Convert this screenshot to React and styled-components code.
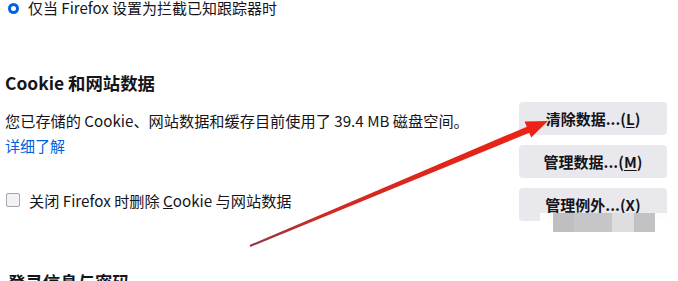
import React from "react";
import styled, { createGlobalStyle } from "styled-components";

const Global = createGlobalStyle`
  html, body {
    margin: 0;
    padding: 0;
    background: #fff;
  }
  body {
    font-family: "Noto Sans CJK SC", "Noto Sans", sans-serif;
    color: #15141a;
    overflow: hidden;
  }
`;

const Page = styled.div`
  position: relative;
  width: 678px;
  height: 281px;
  overflow: hidden;
  font-size: 15px;
`;

const OptionRow = styled.label`
  display: flex;
  align-items: center;
  gap: 9px;
  height: 16px;
  padding-left: 8px;
  font-size: 15px;
  line-height: 16px;
`;

const Radio = styled.span`
  width: 11px;
  height: 11px;
  box-sizing: border-box;
  border-radius: 50%;
  border: 3.5px solid #0061e0;
  background: #fff;
  flex-shrink: 0;
`;

const Section = styled.section`
  padding: 56px 11px 0 5px;
`;

const Heading = styled.h2`
  margin: 0;
  font-size: 17.4px;
  line-height: 22px;
  font-weight: 700;
`;

const Body = styled.div`
  display: flex;
  align-items: flex-start;
  margin-top: 6px;
`;

const Left = styled.div`
  flex: 1;
  padding-top: 10px;
`;

const Text = styled.div`
  font-size: 15.2px;
  line-height: 20px;
  white-space: nowrap;
`;

const Link = styled.a`
  display: block;
  margin-top: 6px;
  font-size: 15px;
  line-height: 20px;
  color: #0061e0;
  text-decoration: none;
`;

const CheckRow = styled.label`
  display: flex;
  align-items: center;
  gap: 9px;
  margin-top: 34px;
  padding-left: 1px;
  font-size: 15.2px;
  line-height: 20px;
`;

const Checkbox = styled.span`
  width: 14px;
  height: 14px;
  box-sizing: border-box;
  border: 1px solid #a4a4ad;
  border-radius: 2px;
  background: #f3f3f6;
  flex-shrink: 0;
`;

const Buttons = styled.div`
  display: flex;
  flex-direction: column;
  gap: 10px;
  width: 148px;
  margin-top: 2px;
`;

const Button = styled.button`
  height: 33px;
  border: none;
  border-radius: 4px;
  background: #e9e9ed;
  color: #15141a;
  font-family: inherit;
  font-size: 15px;
  font-weight: 600;
  padding: 0;
  u {
    text-underline-offset: 2px;
  }
`;

const NextHeading = styled.h2`
  margin: 50px 0 0 8px;
  font-size: 17.4px;
  line-height: 22px;
  font-weight: 700;
`;

const Arrow = styled.svg`
  position: absolute;
  left: 0;
  top: 0;
  pointer-events: none;
`;

const Watermark = styled.div`
  position: absolute;
  left: 540px;
  top: 213px;
  width: 138px;
  height: 68px;
  background: rgba(255, 255, 255, 0.9);
  display: flex;
  align-items: flex-start;
  padding-left: 13px;
  box-sizing: border-box;
`;

const Block = styled.span`
  height: 19px;
  background: ${p => p.$c};
`;

export default function App() {
  return (
    <Page>
      <Global />
      <OptionRow>
        <Radio />
        仅当 Firefox 设置为拦截已知跟踪器时
      </OptionRow>
      <Section>
        <Heading>Cookie 和网站数据</Heading>
        <Body>
          <Left>
            <Text>您已存储的 Cookie、网站数据和缓存目前使用了 39.4 MB 磁盘空间。</Text>
            <Link>详细了解</Link>
            <CheckRow>
              <Checkbox />
              <span>
                关闭 Firefox 时删除 <u>C</u>ookie 与网站数据
              </span>
            </CheckRow>
          </Left>
          <Buttons>
            <Button>
              清除数据...(<u>L</u>)
            </Button>
            <Button>
              管理数据...(<u>M</u>)
            </Button>
            <Button>
              管理例外...(<u>X</u>)
            </Button>
          </Buttons>
        </Body>
      </Section>
      <NextHeading>登录信息与密码</NextHeading>
      <Watermark>
        <Block $c="#bfbfc1" style={{ width: 21 }} />
        <Block $c="#c6c6c8" style={{ width: 38 }} />
        <Block $c="#dedee0" style={{ width: 22 }} />
        <Block $c="#c2c2c4" style={{ width: 21 }} />
      </Watermark>
      <Arrow width="678" height="281" viewBox="0 0 678 281">
        <defs>
          <linearGradient id="ar" x1="250" y1="246" x2="548" y2="121" gradientUnits="userSpaceOnUse">
            <stop offset="0" stopColor="#8a3a4a" />
            <stop offset="0.25" stopColor="#d02a22" />
            <stop offset="1" stopColor="#ee2216" />
          </linearGradient>
        </defs>
        <polygon
          points="249.6,245.1 250.4,246.9 530,132.6 527.5,126.4"
          fill="url(#ar)"
        />
        <polygon points="548,121 524.6,121.6 531.2,137.6" fill="#ee2216" />
      </Arrow>
    </Page>
  );
}
